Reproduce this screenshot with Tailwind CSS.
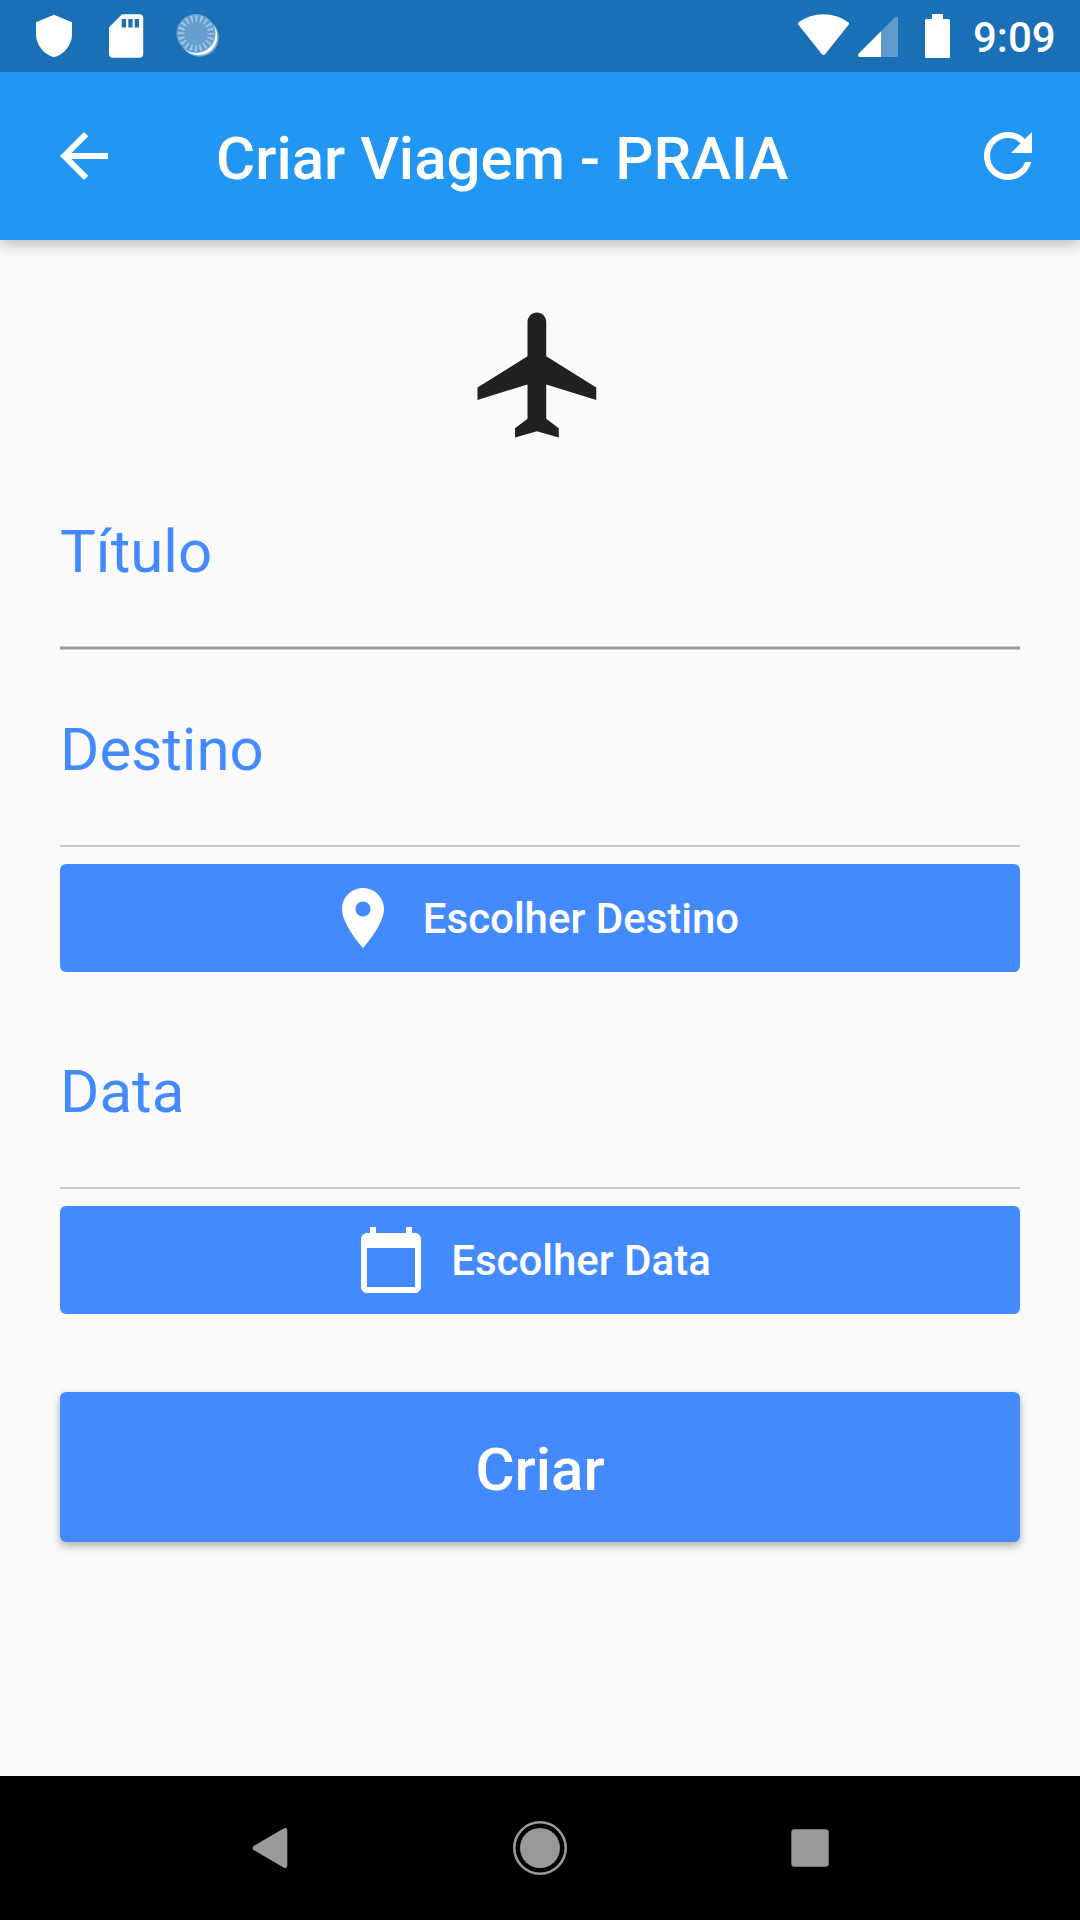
<!DOCTYPE html>
<html lang="pt">
<head>
<meta charset="utf-8">
<title>Criar Viagem</title>
<script src="https://cdn.jsdelivr.net/npm/@tailwindcss/browser@4"></script>
</head>
<body class="flex h-[1920px] w-[1080px] flex-col overflow-hidden bg-[#fafafa] font-['Roboto',sans-serif]">
  <!-- status bar -->
  <div class="relative z-10 flex h-[72px] shrink-0 items-start bg-[#1970b6] text-white">
    <svg class="h-[72px] w-[240px]" viewBox="0 0 240 72" fill="currentColor">
      <path d="M54 14.7 36 22.3v12.2C36 44.800 44 54.800 54 57.200 64 54.800 72 44.800 72 34.500V22.300z"/>
      <path fill-rule="evenodd" d="M122 14.300h17.500a3.700 3.700 0 0 1 3.700 3.700v36a3.700 3.700 0 0 1-3.700 3.700h-26.800a3.700 3.700 0 0 1-3.700-3.700V27.300zM121.700 19v8.500h4.300V19zM128.300 19v8.500h4.300V19zM134.700 19v8.500h4.300V19z"/>
      <circle cx="199.500" cy="37.500" r="19.300" fill-opacity=".4"/>
      <circle cx="198.500" cy="36.500" r="18.800"/>
      <circle cx="196" cy="33.500" r="19.500" fill="#669fce"/>
      <circle cx="196" cy="33.500" r="15" fill="none" stroke="#a3c5e2" stroke-width="6.500" stroke-dasharray="1.900 2.812" stroke-dashoffset=".95"/>
    </svg>
    <svg class="ml-auto h-[72px] w-[190px]" viewBox="780 0 190 72" fill="currentColor">
      <path d="M798.600 22.300C813 11.500 834 11.500 848.400 22.300q1.200 1 .4 2.300L825.300 54q-1.800 1.900-3.600 0L798.200 24.600q-.8-1.300.4-2.300z"/>
      <path fill-opacity=".3" d="M881 31.300 894.500 17.800Q898 15.300 898 18.500V55.500Q898 57 896.500 57H881z"/>
      <path d="M881 31.300V57H859.500Q857 56.500 858.500 53.800z"/>
      <path d="M932 14h11v5h5.500a1.500 1.500 0 0 1 1.500 1.500v36a1.500 1.500 0 0 1-1.500 1.500h-22a1.500 1.500 0 0 1-1.500-1.500v-36a1.500 1.500 0 0 1 1.500-1.500h5.500z"/>
    </svg>
    <span class="w-[110px] pt-[17px] pl-[3px] text-[42px] leading-[42px] font-medium">9:09</span>
  </div>
  <!-- app bar -->
  <header class="relative flex h-[168px] shrink-0 items-center bg-[#2196f3] px-12 text-white shadow-[0_6px_12px_rgba(0,0,0,0.14),0_3px_15px_rgba(0,0,0,0.12)]">
    <svg class="size-[72px]" viewBox="0 0 24 24" fill="currentColor"><path d="M20 11H7.830l5.590-5.590L12 4l-8 8 8 8 1.410-1.410L7.830 13H20v-2z"/></svg>
    <h1 class="ml-24 pt-[5px] text-[60px] leading-[60px] font-medium">Criar Viagem - PRAIA</h1>
    <svg class="-mr-3 ml-auto size-[72px]" viewBox="0 0 24 24" fill="currentColor"><path d="M17.650 6.350C16.200 4.900 14.210 4 12 4c-4.420 0-7.990 3.580-7.990 8s3.570 8 7.990 8c3.730 0 6.840-2.550 7.730-6h-2.080c-.82 2.330-3.040 4-5.650 4-3.310 0-6-2.690-6-6s2.690-6 6-6c1.660 0 3.140.69 4.220 1.780L13 11h7V4l-2.350 2.350z"/></svg>
  </header>
  <!-- form -->
  <main class="flex grow flex-col px-[60px] pt-[60px] text-[60px] leading-[60px] text-[#448aff]">
    <svg class="size-[150px] self-center fill-[#212121]" viewBox="0 0 24 24"><path d="M21 16v-2l-8-5V3.500c0-.83-.67-1.500-1.500-1.500S10 2.670 10 3.500V9l-8 5v2l8-2.500V19l-2 1.500V22l3.500-1 3.500 1v-1.500L13 19v-5.500l8 2.500z"/></svg>
    <label class="flex h-[200px] flex-col pt-[72px]">Título<span class="mt-auto h-1 border-y border-[#cacaca] bg-[#9a9a9a]"></span></label>
    <label class="flex h-[197px] flex-col pt-[70px]">Destino<span class="mt-auto h-0.5 bg-[#c8c8c8]"></span></label>
    <button class="mt-[17px] flex h-[108px] shrink-0 items-center justify-center gap-6 rounded-md bg-[#448aff] pr-3.5 text-[42px] leading-[42px] font-medium text-white">
      <svg class="size-[72px]" viewBox="0 0 24 24" fill="currentColor"><path d="M12 2C8.130 2 5 5.130 5 9c0 5.250 7 13 7 13s7-7.750 7-13c0-3.870-3.130-7-7-7zm0 9.500c-1.380 0-2.500-1.120-2.500-2.500s1.120-2.500 2.500-2.500 2.500 1.120 2.500 2.500-1.120 2.500-2.500 2.500z"/></svg>
      <span class="pt-0.5">Escolher Destino</span>
    </button>
    <label class="flex h-[217px] flex-col pt-[90px]">Data<span class="mt-auto h-0.5 bg-[#c8c8c8]"></span></label>
    <button class="mt-[17px] flex h-[108px] shrink-0 items-center justify-center gap-6 rounded-md bg-[#448aff] pr-3.5 text-[42px] leading-[42px] font-medium text-white">
      <svg class="size-[72px]" viewBox="0 0 24 24" fill="currentColor"><path d="M20 3h-1V1h-2v2H7V1H5v2H4c-1.100 0-2 .9-2 2v16c0 1.100.9 2 2 2h16c1.100 0 2-.9 2-2V5c0-1.100-.9-2-2-2zm0 18H4V8h16v13z"/></svg>
      <span class="pt-0.5">Escolher Data</span>
    </button>
    <button class="mt-[78px] flex h-[150px] shrink-0 items-center justify-center rounded-md bg-[#448aff] pt-[5px] font-medium text-white shadow-[0_5px_8px_rgba(0,0,0,0.22),0_2px_8px_rgba(0,0,0,0.1)]">Criar</button>
  </main>
  <!-- system navigation -->
  <nav class="flex h-36 shrink-0 items-center justify-around bg-black px-[135px] text-[#999]">
    <svg class="size-[60px]" viewBox="0 0 60 60" fill="currentColor"><path d="M13.600 28 43.500 10.500Q47.300 8.800 47.300 13V47Q47.300 51.200 43.500 49.500L13.600 32Q11.400 30 13.600 28z"/></svg>
    <svg class="size-[60px]" viewBox="0 0 60 60" fill="currentColor"><circle cx="30" cy="30" r="20"/><circle cx="30" cy="30" r="25.700" fill="none" stroke="currentColor" stroke-width="2.600"/></svg>
    <svg class="size-[60px]" viewBox="0 0 60 60" fill="currentColor"><rect x="11.300" y="11.300" width="37.400" height="37.400" rx="3"/></svg>
  </nav>
</body>
</html>
